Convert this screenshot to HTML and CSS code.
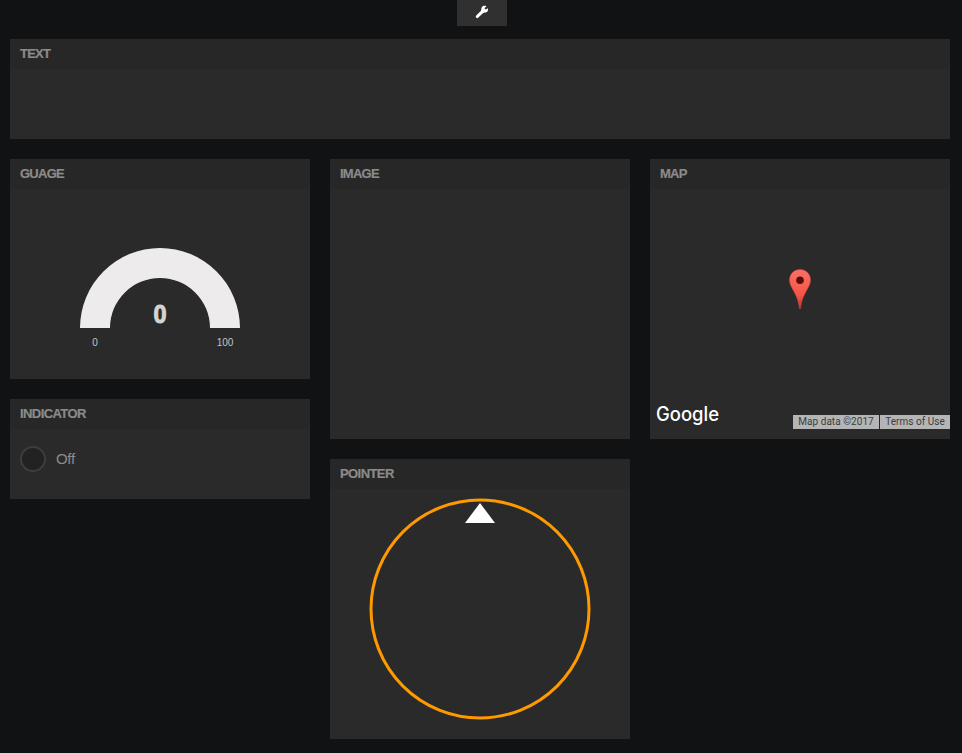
FILE: index.html
```html
<!DOCTYPE html>
<html lang="en">
<head>
<meta charset="utf-8">
<title>Dashboard</title>
<link rel="stylesheet" href="styles.css">
</head>
<body>
<header class="topbar">
  <button class="settings" aria-label="Settings">
    <svg width="14" height="14" viewBox="0 0 14 14"><path d="M2.3 11.5 7.6 6.4" stroke="#fff" stroke-width="3.1" stroke-linecap="round"/><path d="M12.9 3.2 10.8 4.6 9.4 3.3 11.4 1.2C9.5.3 7.6.8 6.8 2.2 6.2 3.3 6.3 4.5 6.3 4.5L5.8 6.4 7.8 8.3 9.3 7.6C11.6 8 13.7 6 12.9 3.2Z" fill="#fff"/></svg>
  </button>
</header>
<main class="board">
  <section class="pane wide"><h2>TEXT</h2></section>
  <div class="column">
    <section class="pane gauge-pane">
      <h2>GUAGE</h2>
      <div class="gauge">
        <svg width="160" height="80" viewBox="0 0 160 80"><path d="M0 80A80 80 0 0 1 160 80H130A50 50 0 0 0 30 80Z" fill="#edebeb"/></svg>
        <strong class="value">0</strong>
        <div class="limits"><span>0</span><span>100</span></div>
      </div>
    </section>
    <section class="pane indicator-pane">
      <h2 class="long">INDICATOR</h2>
      <div class="indicator"><span class="light"></span><span>Off</span></div>
    </section>
  </div>
  <div class="column">
    <section class="pane tall"><h2>IMAGE</h2></section>
    <section class="pane tall">
      <h2 class="long">POINTER</h2>
      <svg class="dial" width="300" height="250" viewBox="0 0 300 250"><circle cx="150" cy="120" r="109" fill="none" stroke="#ff9900" stroke-width="3"/><path d="M150 14 165 34H135Z" fill="#fff"/></svg>
    </section>
  </div>
  <div class="column">
    <section class="pane tall map-pane">
      <h2>MAP</h2>
      <div class="map">
        <svg class="pin" width="22" height="40" viewBox="0 0 22 40">
          <defs><linearGradient id="red" x1="0" y1="0" x2="0" y2="1"><stop offset="0" stop-color="#fb7064"/><stop offset=".65" stop-color="#f75448"/><stop offset="1" stop-color="#b83a32"/></linearGradient></defs>
          <path d="M11 .5C5 .5.5 5 .5 11 .5 19 9 24 10.4 39.5H11.6C13 24 21.5 19 21.5 11 21.5 5 17 .5 11 .5Z" fill="url(#red)" stroke="#c9453c" stroke-width=".6"/>
          <circle cx="11" cy="11.3" r="3.8" fill="#590d0b"/>
        </svg>
        <svg class="brand" width="70" height="28" viewBox="0 0 70 28"><text x="2" y="18" textLength="63" lengthAdjust="spacingAndGlyphs">Google</text></svg>
        <div class="credits"><span>Map data ©2017</span><span>Terms of Use</span></div>
      </div>
    </section>
  </div>
</main>
</body>
</html>
```

FILE: styles.css
```css
* { box-sizing: border-box; }
body {
  margin: 0;
  min-height: 753px;
  background: #111214;
  color: #8b8b8b;
  font-family: "Liberation Sans", Arial, sans-serif;
}
svg { display: block; }
.topbar { height: 39px; padding-left: 457px; }
.settings {
  display: block;
  width: 50px;
  height: 26px;
  border: 0;
  padding: 5px 18px 7px;
  background: #303030;
}
.board {
  display: grid;
  grid-template-columns: repeat(3, 300px);
  gap: 20px;
  width: 940px;
  margin-left: 10px;
  align-items: start;
}
.column { display: grid; gap: 20px; }
.pane { background: #2a2a2a; overflow: hidden; }
.pane h2 {
  height: 30px;
  margin: 0;
  padding: 0 10px;
  background: #272727;
  font-size: 13px;
  line-height: 29px;
  font-weight: 700;
  letter-spacing: -0.75px;
  -webkit-text-stroke: 0.2px #8b8b8b;
}
.pane h2.long { letter-spacing: -0.58px; }
.wide { grid-column: 1 / -1; height: 100px; }
.gauge-pane { height: 220px; }
.indicator-pane { height: 100px; }
.tall { height: 280px; }
.gauge { position: relative; width: 160px; margin: 59px auto 0; }
.value {
  position: absolute;
  top: 52px;
  left: 0;
  width: 100%;
  text-align: center;
  color: #d3d4d4;
  font-size: 25px;
  line-height: 29px;
  transform: scaleX(0.94);
  -webkit-text-stroke: 1px #d3d4d4;
}
.limits {
  display: flex;
  justify-content: space-between;
  padding-top: 8px;
  color: #c3c3c3;
  font-size: 10px;
  line-height: 14px;
}
.limits span { width: 30px; text-align: center; }
.indicator {
  display: flex;
  align-items: center;
  gap: 10px;
  padding: 17px 10px;
  font-size: 15px;
  line-height: 26px;
  letter-spacing: -0.3px;
}
.light {
  width: 26px;
  height: 26px;
  border: 2px solid #3d3d3d;
  border-radius: 50%;
  background: #222;
}
.map { position: relative; height: 250px; }
.pin { position: absolute; left: 139px; top: 80px; }
.brand { position: absolute; left: 4px; top: 214px; }
.brand text {
  fill: #fff;
  font: 500 19.5px Inter, sans-serif;
}
.credits {
  position: absolute;
  right: 0;
  bottom: 10px;
  display: flex;
  gap: 1px;
  color: #3c3c3c;
  font: 10px/14px Roboto, sans-serif;
  letter-spacing: 0.04px;
  white-space: nowrap;
}
.credits span { width: 86px; text-align: center; background: #b5b5b5; }
.credits span + span { width: 70px; }
```
